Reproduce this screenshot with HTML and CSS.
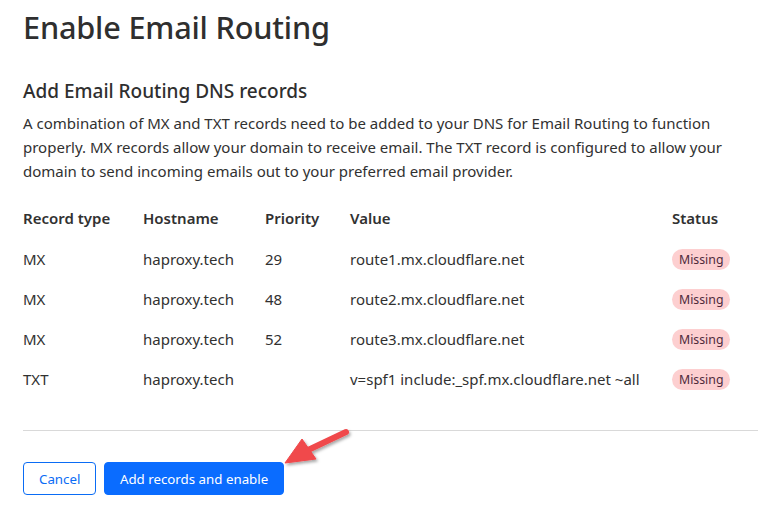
FILE: index.html
```html
<!DOCTYPE html>
<html lang="en">
<head>
<meta charset="utf-8">
<title>Enable Email Routing</title>
<link rel="stylesheet" href="styles.css">
</head>
<body>
<main class="page">
  <h1 class="title">Enable Email Routing</h1>
  <section class="section">
    <h2 class="subtitle">Add Email Routing DNS records</h2>
    <p class="desc">A combination of MX and TXT records need to be added to your DNS for Email Routing to function properly. MX records allow your domain to receive email. The TXT record is configured to allow your domain to send incoming emails out to your preferred email provider.</p>
    <table class="records">
      <thead>
        <tr><th class="c-type">Record type</th><th class="c-host">Hostname</th><th class="c-prio">Priority</th><th class="c-val">Value</th><th class="c-status">Status</th></tr>
      </thead>
      <tbody>
        <tr><td>MX</td><td>haproxy.tech</td><td>29</td><td>route1.mx.cloudflare.net</td><td><span class="badge">Missing</span></td></tr>
        <tr><td>MX</td><td>haproxy.tech</td><td>48</td><td>route2.mx.cloudflare.net</td><td><span class="badge">Missing</span></td></tr>
        <tr><td>MX</td><td>haproxy.tech</td><td>52</td><td>route3.mx.cloudflare.net</td><td><span class="badge">Missing</span></td></tr>
        <tr><td>TXT</td><td>haproxy.tech</td><td></td><td>v=spf1 include:_spf.mx.cloudflare.net ~all</td><td><span class="badge">Missing</span></td></tr>
      </tbody>
    </table>
  </section>
  <hr class="divider">
  <div class="actions">
    <button class="btn btn-outline">Cancel</button>
    <button class="btn btn-primary">Add records and enable</button>
  </div>
  <svg class="arrow" width="90" height="60" viewBox="0 0 90 60" aria-hidden="true">
    <defs>
      <filter id="sh" x="-20%" y="-20%" width="150%" height="150%">
        <feDropShadow dx="1.5" dy="2" stdDeviation="1.5" flood-color="#000" flood-opacity="0.35"/>
      </filter>
    </defs>
    <g filter="url(#sh)" fill="#f0484b" stroke="#f0484b">
      <line x1="74" y1="8" x2="34" y2="27" stroke-width="6" stroke-linecap="round"/>
      <polygon points="13,39 30,15 44,35" stroke-width="1" stroke-linejoin="round"/>
    </g>
  </svg>
</main>
</body>
</html>
```
FILE: styles.css
```css
* { box-sizing: border-box; }
html, body { margin: 0; padding: 0; background: #fff; }
body {
  font-family: "Noto Sans", "Open Sans", "DejaVu Sans", sans-serif;
  color: #313131;
}
.page {
  position: relative;
  padding: 0 0 0 23px;
  width: 758px;
  height: 505px;
  overflow: hidden;
}
.title {
  margin: 0;
  padding-top: 6px;
  font-size: 30.7px;
  line-height: 42px;
  font-weight: 500;
  color: #2f2f2f;
  letter-spacing: -0.2px;
}
.section { margin-top: 30px; }
.subtitle {
  margin: 0;
  font-size: 19px;
  line-height: 26px;
  font-weight: 500;
  color: #2f2f2f;
}
.desc {
  margin: 7px 0 0;
  width: 715px;
  font-size: 15px;
  line-height: 24px;
}
.records {
  margin-top: 14px;
  border-collapse: collapse;
  font-size: 15px;
}
.records th {
  text-align: left;
  font-weight: 600;
  height: 42px;
  padding: 0;
  vertical-align: middle;
}
.records td {
  height: 40px;
  padding: 0;
  vertical-align: middle;
}
.c-type { width: 120px; }
.c-host { width: 122px; }
.c-prio { width: 85px; }
.c-val { width: 322px; }
.badge {
  display: inline-block;
  background: #fdcfd0;
  color: #4f2a3c;
  font-size: 12.3px;
  line-height: 21px;
  padding: 0 7px;
  border-radius: 11px;
}
.divider {
  margin: 31px 0 0;
  border: 0;
  border-top: 1px solid #d9d9d9;
}
.actions {
  display: flex;
  gap: 8px;
  margin-top: 31px;
}
.btn {
  font-family: inherit;
  font-size: 13.3px;
  height: 33px;
  border-radius: 4px;
  padding: 0 15px;
  cursor: pointer;
}
.btn-outline {
  background: #fff;
  color: #0a6cf5;
  border: 1px solid #0a6cf5;
}
.btn-primary {
  background: #0a6cff;
  color: #fff;
  border: 1px solid #0a6cff;
  padding: 0 14.5px;
}
.arrow {
  position: absolute;
  left: 272px;
  top: 424px;
}
```
